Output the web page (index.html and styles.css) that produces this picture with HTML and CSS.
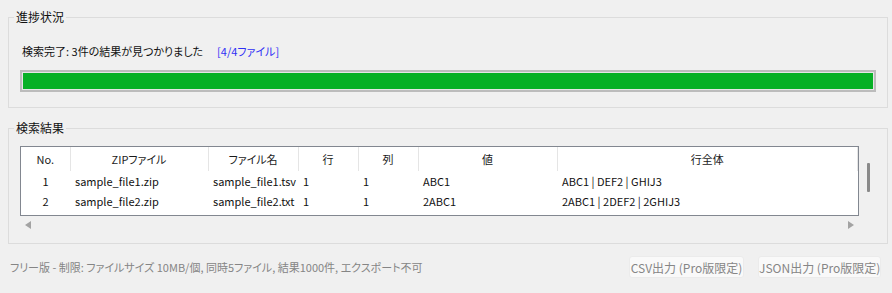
FILE: index.html
```html
<!DOCTYPE html>
<html lang="ja">
<head>
    <meta charset="UTF-8">
    <meta name="viewport" content="width=device-width, initial-scale=1.0">
    <title>ZIP検索</title>
    <link rel="stylesheet" href="styles.css">
</head>
<body>
    <div class="app">
        <fieldset class="group">
            <legend>進捗状況</legend>
            <div class="status">検索完了: 3件の結果が見つかりました<span class="status-count">[4/4ファイル]</span></div>
            <div class="progress"><div class="progress-fill"></div></div>
        </fieldset>

        <fieldset class="group results">
            <legend>検索結果</legend>
            <div class="table-row">
                <div class="table-box">
                    <table class="result-table">
                        <colgroup>
                            <col style="width: 49px">
                            <col style="width: 138px">
                            <col style="width: 90px">
                            <col style="width: 60px">
                            <col style="width: 60px">
                            <col style="width: 139px">
                            <col>
                        </colgroup>
                        <thead>
                            <tr>
                                <th>No.</th>
                                <th>ZIPファイル</th>
                                <th>ファイル名</th>
                                <th>行</th>
                                <th>列</th>
                                <th>値</th>
                                <th>行全体</th>
                            </tr>
                        </thead>
                        <tbody>
                            <tr>
                                <td class="num">1</td>
                                <td>sample_file1.zip</td>
                                <td>sample_file1.tsv</td>
                                <td>1</td>
                                <td>1</td>
                                <td>ABC1</td>
                                <td>ABC1 | DEF2 | GHIJ3</td>
                            </tr>
                            <tr>
                                <td class="num">2</td>
                                <td>sample_file2.zip</td>
                                <td>sample_file2.txt</td>
                                <td>1</td>
                                <td>1</td>
                                <td>2ABC1</td>
                                <td>2ABC1 | 2DEF2 | 2GHIJ3</td>
                            </tr>
                        </tbody>
                    </table>
                </div>
                <div class="vscroll"><div class="vscroll-thumb"></div></div>
            </div>
            <div class="hscroll">
                <span class="arrow-left"></span>
                <span class="arrow-right"></span>
            </div>
        </fieldset>
    </div>

    <div class="footer">
        <div class="footer-note">フリー版 - 制限: ファイルサイズ 10MB/個, 同時5ファイル, 結果1000件, エクスポート不可</div>
        <button class="export-button csv" disabled>CSV出力 (Pro版限定)</button>
        <button class="export-button json" disabled>JSON出力 (Pro版限定)</button>
    </div>
</body>
</html>
```

FILE: styles.css
```css
body {
    margin: 0;
    background-color: #f0f0f0;
    font-family: "Noto Sans CJK JP", sans-serif;
    font-size: 11px;
    color: #111;
    font-feature-settings: "palt";
}
.app {
    padding: 9px 4px 0 8px;
}
.group {
    margin: 0;
    padding: 0 11px 15px 11px;
    border: 1px solid #dcdcdc;
    min-width: 0;
}
.group legend {
    margin-left: -6px;
    padding: 0 2px;
    line-height: 16px;
    font-size: 12px;
}
.status {
    margin: 18px 0 0 2px;
    line-height: 16px;
}
.status-count {
    margin-left: 14px;
    color: #2f2ff5;
}
.progress {
    margin-top: 11px;
    height: 16px;
    padding: 1px;
    border: 2px solid #bcbcbc;
    background-color: #e6e6e6;
}
.progress-fill {
    height: 100%;
    background-color: #06b025;
}
.results {
    margin-top: 12px;
    padding-bottom: 9px;
}
.table-row {
    display: flex;
    margin-top: 10px;
}
.table-box {
    width: 837px;
    height: 68px;
    border: 1px solid #828790;
    background-color: #fff;
}
.result-table {
    width: 100%;
    border-collapse: collapse;
    table-layout: fixed;
}
.result-table th {
    height: 24px;
    padding: 0;
    font-weight: normal;
    color: #1a1a1a;
    border-right: 1px solid #e5e5e5;
}
.result-table td {
    height: 20px;
    padding: 0 0 0 5px;
    white-space: nowrap;
    overflow: hidden;
}
.result-table td.num {
    padding: 0;
    text-align: center;
}
.vscroll {
    flex: 1;
}
.vscroll-thumb {
    width: 3px;
    height: 29px;
    margin: 17px 0 0 8px;
    background-color: #8a8a8a;
    border-radius: 1px;
}
.hscroll {
    width: 839px;
    height: 18px;
    padding: 0 5px;
    box-sizing: border-box;
    display: flex;
    justify-content: space-between;
    align-items: center;
}
.arrow-left {
    width: 0;
    height: 0;
    border-top: 4px solid transparent;
    border-bottom: 4px solid transparent;
    border-right: 6px solid #a3a3a3;
}
.arrow-right {
    width: 0;
    height: 0;
    border-top: 4px solid transparent;
    border-bottom: 4px solid transparent;
    border-left: 6px solid #a3a3a3;
}
.footer {
    display: flex;
    align-items: center;
    padding: 12px 11px 0 10px;
}
.footer-note {
    flex: 1;
    color: #858585;
}
.export-button {
    height: 22px;
    padding: 0;
    font-family: inherit;
    font-size: 12px;
    font-feature-settings: "palt";
    white-space: nowrap;
    color: #868686;
    background-color: #f9f9f9;
    border: 1px solid #ebebeb;
    border-radius: 3px;
}
.export-button.csv {
    width: 115px;
}
.export-button.json {
    width: 123px;
    margin-left: 14px;
}
```
